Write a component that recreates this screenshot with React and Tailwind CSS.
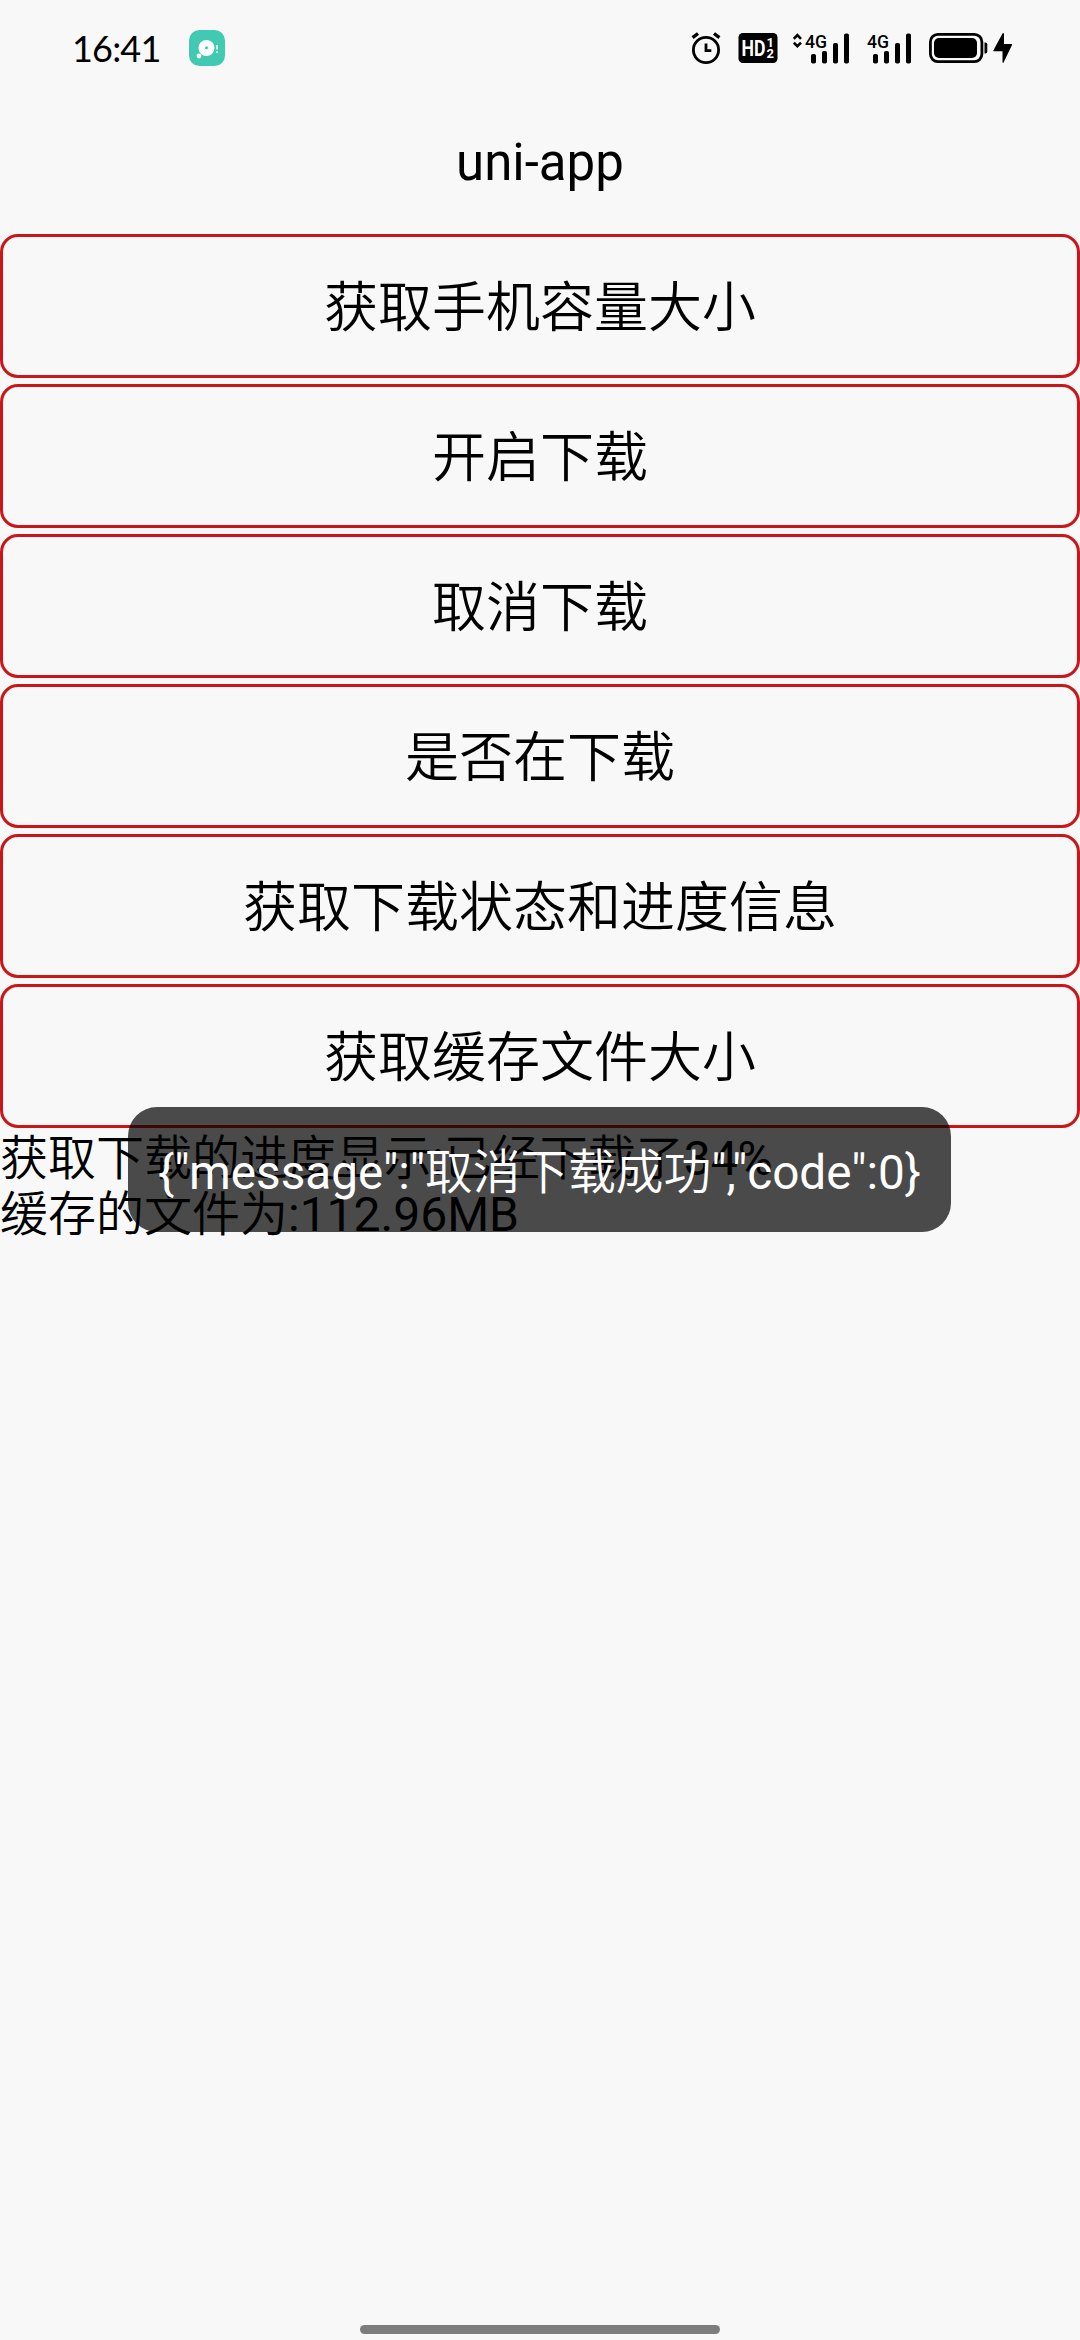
const actions = [
  '获取手机容量大小',
  '开启下载',
  '取消下载',
  '是否在下载',
  '获取下载状态和进度信息',
  '获取缓存文件大小',
];

function ChatBadge() {
  return (
    <svg className="ml-[28px] mt-[29px] w-[38px] h-[38px]" viewBox="0 0 38 38">
      <rect x="1" y="1" width="36" height="36" rx="10.5" fill="#42c9b2" />
      <circle cx="18.5" cy="19" r="8" fill="#fff" />
      <circle cx="11" cy="27" r="2.4" fill="#fff" />
      <circle cx="18.5" cy="18.8" r="1.5" fill="#42c9b2" />
      <path d="M29 16v4.500M29 22.300v1.700" stroke="#fff" strokeWidth="1.500" />
    </svg>
  );
}

function AlarmIcon() {
  return (
    <svg className="w-[30px] h-8" viewBox="0 0 30 32" fill="none" stroke="#000">
      <circle cx="15" cy="18" r="12.600" strokeWidth="2.800" />
      <path d="M15 11.500V18.600H20.300" strokeWidth="2.800" />
      <path d="M1.600 5.700L7 1.500M23 1.500L28.400 5.700" strokeWidth="3.400" />
    </svg>
  );
}

function HdIcon() {
  return (
    <svg className="ml-[17px] w-10 h-[30px] font-['Roboto',sans-serif]" viewBox="0 0 40 30">
      <rect x="0.500" width="39" height="30" rx="4.500" fill="#000" />
      <g fill="#fff" fontWeight="700">
        <text x="3.500" y="22.700" fontSize="22" textLength="24" lengthAdjust="spacingAndGlyphs">HD</text>
        <text x="28.500" y="13.800" fontSize="13">1</text>
        <text x="28.500" y="25.300" fontSize="13">2</text>
      </g>
    </svg>
  );
}

function Signal({ data }) {
  return (
    <svg className="-mt-1 w-14 h-[35px] font-['Roboto',sans-serif]" viewBox="0 -4 56 35">
      {data && (
        <path d="M0.800 5.800L4.400 2.200L8 5.800M0.800 9.600L4.400 13.200L8 9.600" fill="none" stroke="#000" strokeWidth="2.600" />
      )}
      <text x="12" y="14.800" fontSize="19" fontWeight="500" textLength="22" lengthAdjust="spacingAndGlyphs">4G</text>
      <rect x="18" y="21" width="5" height="9.500" rx="1.800" />
      <rect x="29" y="18" width="5" height="12.500" rx="1.800" />
      <rect x="40" y="10" width="5" height="20.500" rx="1.800" />
      <rect x="51" y="0.500" width="5" height="30" rx="1.800" />
    </svg>
  );
}

function Battery() {
  return (
    <svg className="ml-[18px] w-[84px] h-8" viewBox="0 0 84 32">
      <rect x="1.400" y="2.400" width="51.500" height="27.200" rx="7.500" fill="none" stroke="#000" strokeWidth="2.800" />
      <rect x="5" y="6" width="43" height="20" rx="5" />
      <path d="M55.500 10.500h1a1.800 1.800 0 0 1 1.800 1.800v7.400a1.800 1.800 0 0 1-1.800 1.800h-1z" />
      <path d="M73.500 1.500L64.300 18.500q-.3 .8 .5 .8H73.500V30.300q.5 1.200 1.200 0L83 13q.3-.9-.5-.9H75V2q-.5-1.500-1.500-.5z" />
    </svg>
  );
}

function StatusBar() {
  return (
    <div className="flex items-start h-[102px] pl-[72px] pr-[67px]">
      <span className="mt-[26px] w-[88px] text-[36px] leading-[44px] tracking-[-0.8px] whitespace-nowrap font-['Lato',sans-serif]">16:41</span>
      <ChatBadge />
      <div className="ml-auto flex items-center mt-8">
        <AlarmIcon />
        <HdIcon />
        <div className="ml-[15px] flex">
          <Signal data />
        </div>
        <div className="ml-[6px] flex">
          <Signal />
        </div>
        <Battery />
      </div>
    </div>
  );
}

export default function App() {
  return (
    <div className="relative flex flex-col h-[2340px] w-[1080px] overflow-hidden bg-[#f8f8f8] text-black font-['Roboto','Noto_Sans_CJK_SC',sans-serif]">
      <StatusBar />
      <header className="h-[132px] pt-[31px] text-center text-[51px] leading-[60px]">uni-app</header>

      <main className="flex flex-col">
        <div className="flex flex-col gap-[6px]">
          {actions.map((label) => (
            <button
              key={label}
              className="h-36 pb-[4px] rounded-[18px] border-[3px] border-[#cb1619] text-[54px] leading-[80px] font-[350] font-['Noto_Sans_CJK_SC',sans-serif]"
            >
              {label}
            </button>
          ))}
        </div>
        <div className="pt-[3px] text-[48px] leading-[56px] whitespace-nowrap font-[350]">
          <p>
            获取下载的进度显示<span className="font-normal">:</span>已经下载了<span className="font-normal">34%</span>
          </p>
          <p>
            缓存的文件为<span className="font-normal">:112.96MB</span>
          </p>
        </div>
      </main>

      {/* Toast */}
      <div className="absolute left-32 top-[1107px] w-[823px] h-[125px] pt-[8px] rounded-[29px] bg-black/70 flex items-center justify-center text-white text-[47.7px] whitespace-nowrap">
        <p>
          {'{"message":"'}
          <span className="font-[350]">取消下载成功</span>
          {'","code":0}'}
        </p>
      </div>

      {/* Home indicator */}
      <div className="mt-auto mb-[6px] mx-auto w-[360px] h-[9px] rounded-full bg-[#7d7d7d]" />
    </div>
  );
}
